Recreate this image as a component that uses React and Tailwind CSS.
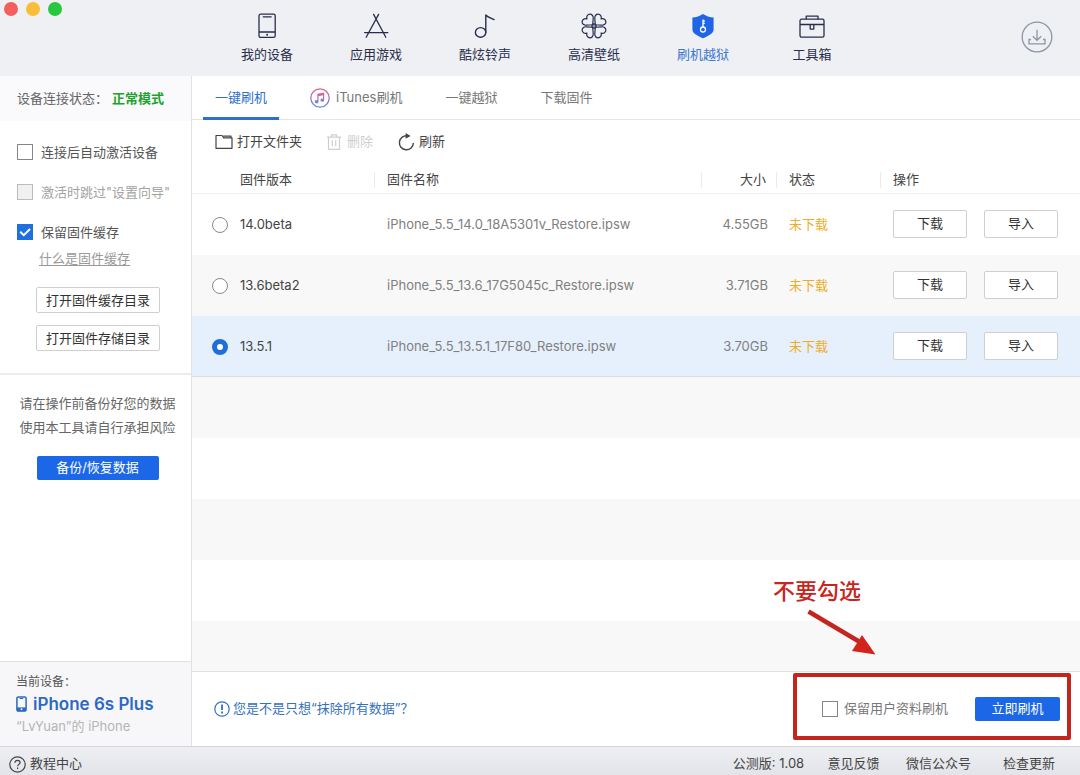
import React, { useState } from "react";

function DeviceIcon() {
  return (
    <svg width="26" height="26" viewBox="0 0 26 26" fill="none" stroke="#2a2e4a" strokeWidth="1.3">
      <rect x="5" y="1.2" width="16.2" height="23.2" rx="1.6" />
      <path d="M8.8 3.8h8.8M5 19h16.2" />
      <circle cx="13.1" cy="21.7" r="1" fill="#2a2e4a" stroke="none" />
    </svg>
  );
}

function AppsIcon() {
  return (
    <svg width="26" height="26" viewBox="0 0 26 26" fill="none" stroke="#2a2e4a" strokeWidth="1.3" strokeLinecap="round">
      <path d="M10.6 1.4 22.8 24.2M15.6 1.4 3.2 24.2M1.6 19.6h23.2" />
    </svg>
  );
}

function NoteIcon() {
  return (
    <svg width="26" height="26" viewBox="0 0 26 26" fill="none" stroke="#2a2e4a" strokeWidth="1.4" strokeLinejoin="round">
      <ellipse cx="8.6" cy="19.4" rx="5.2" ry="4.8" />
      <path d="M13.8 19.4V2c1.5 1.9 4.5 3 8.3 4.6" strokeLinecap="round" />
    </svg>
  );
}

const PETAL = "M13 11.2 8 6.900C6.200 5.300 6.200 3 7.500 1.700 9 .2 11.800.5 13 3c1.200-2.500 4-2.800 5.500-1.300 1.300 1.300 1.300 3.600-.5 5.200z";

function CloverIcon() {
  return (
    <svg width="26" height="26" viewBox="0 0 26 26" fill="none" stroke="#2a2e4a" strokeWidth="1.2" strokeLinejoin="round">
      {[45, 135, 225, 315].map((angle) => (
        <path key={angle} d={PETAL} transform={`rotate(${angle} 13 13)`} />
      ))}
      <circle cx="13" cy="13" r="2.1" fill="#7d93c8" />
    </svg>
  );
}

function ShieldIcon() {
  return (
    <svg width="26" height="26" viewBox="0 0 26 26" fill="none">
      <path d="M13 .9c3 2 6.8 3.3 10.6 3.5v12c0 3.900-5.500 6.600-10.600 8.800-5.100-2.200-10.600-4.900-10.600-8.800v-12C6.200 4.200 10 2.900 13 .9z" fill="#1f66e5" />
      <circle cx="13" cy="16.5" r="2.5" stroke="#fff" strokeWidth="1.3" />
      <path d="M13 14V6.500M13 8h1.800M13 10.300h1.800" stroke="#fff" strokeWidth="1.3" />
    </svg>
  );
}

function ToolboxIcon() {
  return (
    <svg width="26" height="26" viewBox="0 0 26 26" fill="none" stroke="#2a2e4a" strokeWidth="1.3" strokeLinejoin="round">
      <rect x="1" y="6.2" width="24" height="18" rx="1.6" />
      <path d="M7.2 6.2V3.2h11.8v3M1 11.5h24M11.2 11.5v4.6h3.6v-4.6" />
    </svg>
  );
}

function DownloadCircle() {
  return (
    <svg width="32" height="32" viewBox="0 0 32 32" fill="none" stroke="#8e95a3" strokeWidth="1.3">
      <circle cx="16" cy="16" r="14.8" />
      <path d="M16 8.800v10.400M11.800 15.200l4.200 4.100 4.200-4.100M10 18.500H8v4.300h16v-4.300h-2" />
    </svg>
  );
}

function ItunesIcon() {
  return (
    <svg width="20" height="20" viewBox="0 0 20 20" fill="none">
      <defs>
        <linearGradient id="tunes" x1="0" y1="0" x2="0" y2="1">
          <stop offset="0" stopColor="#e8607c" />
          <stop offset=".5" stopColor="#a873c4" />
          <stop offset="1" stopColor="#5b8fe0" />
        </linearGradient>
      </defs>
      <circle cx="10" cy="10" r="9.2" stroke="url(#tunes)" strokeWidth="1.3" />
      <path d="M7.3 5.800 14.200 4.500v7.700a1.900 1.600 0 1 1-1.200-1.500V7.300l-4.500.9v5.600a1.900 1.600 0 1 1-1.200-1.500z" fill="url(#tunes)" />
    </svg>
  );
}

function FolderIcon() {
  return (
    <svg width="18" height="16" viewBox="0 0 18 16" fill="none" stroke="#444" strokeWidth="1.2" strokeLinejoin="round">
      <path d="M1 14.300V1.500h6l1.800 2.300H17v10.500z" />
      <path d="M8.200 2.200H16v1.600" />
    </svg>
  );
}

function TrashIcon() {
  return (
    <svg width="14" height="16" viewBox="0 0 14 16" fill="none" stroke="#cfcfcf" strokeWidth="1.2">
      <path d="M0 3.200h14M4.500 3V.8h5V3M1.500 3.200v12.100h11V3.200M5.300 6.200v6M8.700 6.200v6" />
    </svg>
  );
}

function RefreshIcon() {
  return (
    <svg width="17" height="18" viewBox="0 0 17 18" fill="none">
      <path d="M9.600 2.900A7 7 0 1 0 15.400 10" stroke="#444" strokeWidth="1.4" />
      <path d="M7.600.1 12.600 2.900 7.600 5.700z" fill="#444" />
    </svg>
  );
}

function Checkbox({ id, defaultChecked, disabled }) {
  return (
    <span className="relative flex size-4 shrink-0">
      <input
        id={id}
        type="checkbox"
        defaultChecked={defaultChecked}
        disabled={disabled}
        className="peer size-4 appearance-none border border-[#858585] bg-white checked:border-[#1f6fe0] checked:bg-[#1f6fe0] disabled:border-[#bcbcbc] disabled:bg-[#f0f0f0]"
      />
      <svg viewBox="0 0 16 16" className="pointer-events-none absolute inset-0 hidden peer-checked:block" fill="none" stroke="#fff" strokeWidth="2">
        <path d="M3.2 7.800 6.800 11.200 13 5" />
      </svg>
    </span>
  );
}

const NAV = [
  { label: "我的设备", Icon: DeviceIcon },
  { label: "应用游戏", Icon: AppsIcon },
  { label: "酷炫铃声", Icon: NoteIcon },
  { label: "高清壁纸", Icon: CloverIcon },
  { label: "刷机越狱", Icon: ShieldIcon, active: true },
  { label: "工具箱", Icon: ToolboxIcon },
];

const FIRMWARE = [
  { version: "14.0beta", name: "iPhone_5.5_14.0_18A5301v_Restore.ipsw", size: "4.55GB" },
  { version: "13.6beta2", name: "iPhone_5.5_13.6_17G5045c_Restore.ipsw", size: "3.71GB" },
  { version: "13.5.1", name: "iPhone_5.5_13.5.1_17F80_Restore.ipsw", size: "3.70GB" },
];

function Header() {
  return (
    <header className="grid h-[76px] grid-cols-[1fr_auto_1fr] bg-[#eef0f4]">
      <div className="flex gap-2 pt-[2px] pl-1">
        <span className="size-3.5 rounded-full bg-[#f25f5c]" />
        <span className="size-3.5 rounded-full bg-[#fbbd38]" />
        <span className="size-3.5 rounded-full bg-[#27c840]" />
      </div>
      <nav className="flex">
        {NAV.map(({ label, Icon, active }) => (
          <a
            key={label}
            href="#"
            className={`flex w-[109px] flex-col items-center gap-[5px] pt-[13px] pr-px leading-5 ${active ? "text-[#3a78cf]" : "text-[#2a2e4a]"}`}
          >
            <Icon />
            {label}
          </a>
        ))}
      </nav>
      <div className="flex items-center justify-end pr-[27px] pb-0.5">
        <button type="button" aria-label="下载中心">
          <DownloadCircle />
        </button>
      </div>
    </header>
  );
}

function Sidebar() {
  const outline = "h-[26px] w-[124px] rounded-xs border border-[#cfcfcf] bg-white text-[#333]";
  return (
    <aside className="flex w-48 shrink-0 flex-col border-r border-[#e2e2e4]">
      <div className="flex h-[45px] items-center bg-[#faf9fb] pl-[17px] text-[#666]">
        设备连接状态：<strong className="ml-1 font-bold text-[#1ba32c]">正常模式</strong>
      </div>
      <div className="border-b-2 border-[#ececee] pt-[21px] pb-[22px] pl-[17px] leading-5">
        <div className="flex items-center gap-2 text-[#555]">
          <Checkbox id="auto" />
          <label htmlFor="auto">连接后自动激活设备</label>
        </div>
        <div className="mt-5 flex items-center gap-2 text-[#a3a3a3]">
          <Checkbox id="skip" disabled />
          <label htmlFor="skip">激活时跳过"设置向导"</label>
        </div>
        <div className="mt-5 flex items-center gap-2 text-[#555]">
          <Checkbox id="cache" defaultChecked />
          <label htmlFor="cache">保留固件缓存</label>
        </div>
        <a href="#" className="mt-1.5 ml-[22px] block text-[#999] underline underline-offset-2">什么是固件缓存</a>
        <div className="mt-[19px] ml-[19px] flex flex-col gap-3">
          <button type="button" className={outline}>打开固件缓存目录</button>
          <button type="button" className={outline}>打开固件存储目录</button>
        </div>
      </div>
      <div className="flex flex-1 flex-col items-center pt-4 pl-1">
        <p className="leading-6 text-[#666]">
          请在操作前备份好您的数据
          <br />
          使用本工具请自行承担风险
        </p>
        <button type="button" className="mt-[17px] h-6 w-[122px] rounded-xs bg-[#1b67e8] text-white">备份/恢复数据</button>
      </div>
      <div className="h-[85px] border-t border-[#e2e2e4] bg-[#f7f7f9] pt-2.5 pl-4">
        <p className="text-xs leading-5 text-[#555]">当前设备：</p>
        <p className="flex items-center gap-1.5 text-[17px] leading-6 font-semibold text-[#2c68c4]">
          <svg width="11" height="16" viewBox="0 0 11 16" fill="none">
            <rect x=".9" y=".9" width="9.2" height="14.2" rx="1.4" stroke="#2c68c4" strokeWidth="1.5" />
            <path d="M1 11.400h9v3.800H1z" fill="#2c68c4" />
            <path d="M3.800 2.500h3.400" stroke="#2c68c4" />
            <circle cx="5.5" cy="13.2" r=".9" fill="#fff" />
          </svg>
          iPhone 6s Plus
        </p>
        <p className="leading-5 text-[#b5b5b5]">“LvYuan”的 iPhone</p>
      </div>
    </aside>
  );
}

function Tabs() {
  const tab = "flex items-center gap-1.5 border-b-3 px-3 pt-[3px]";
  return (
    <nav className="flex h-11 gap-[19px] border-b border-[#e2e4e8] pl-[11px] text-[#777]">
      <a href="#" className={`${tab} -mb-px border-[#2d6fca] text-[#2d6fca]`}>一键刷机</a>
      <a href="#" className={`${tab} border-transparent`}>
        <ItunesIcon />
        iTunes刷机
      </a>
      <a href="#" className={`${tab} border-transparent`}>一键越狱</a>
      <a href="#" className={`${tab} border-transparent`}>下载固件</a>
    </nav>
  );
}

function HeadCell({ children, className = "" }) {
  return (
    <th scope="col" className="p-0 pt-0.5 text-left font-normal">
      <div className={`flex h-4 items-center border-l border-[#ebebeb] pl-3 ${className}`}>{children}</div>
    </th>
  );
}

function FirmwareTable() {
  const [picked, setPicked] = useState("13.5.1");
  const action = "h-7 w-[74px] rounded-xs border border-[#cccfd4] bg-white text-[#333]";
  return (
    <table className="w-full table-fixed border-separate border-spacing-0">
      <colgroup>
        <col className="w-[182px]" />
        <col />
        <col className="w-[75px]" />
        <col className="w-[104px]" />
        <col className="w-[200px]" />
      </colgroup>
      <thead className="text-[#444]">
        <tr className="h-[30px] [&>th]:border-b [&>th]:border-[#f0f0f0]">
          <th scope="col" className="p-0 pt-0.5 pl-12 text-left font-normal">固件版本</th>
          <HeadCell>固件名称</HeadCell>
          <HeadCell className="justify-end pr-2.5">大小</HeadCell>
          <HeadCell>状态</HeadCell>
          <HeadCell>操作</HeadCell>
        </tr>
      </thead>
      <tbody className="text-[#808080]">
        {FIRMWARE.map((row, i) => {
          const on = picked === row.version;
          const tone = on ? "bg-[#e6f0fd] [&>td]:border-[#d5dfea]" : i % 2 ? "bg-[#f8f8f8] [&>td]:border-transparent" : "bg-white [&>td]:border-transparent";
          return (
            <tr key={row.version} className={`h-[61px] [&>td]:border-b ${tone}`}>
              <td className="p-0 pt-px pl-5">
                <label className="flex items-center gap-3 text-[#444]">
                  <input
                    type="radio"
                    name="firmware"
                    checked={on}
                    onChange={() => setPicked(row.version)}
                    className="size-4 appearance-none rounded-full border border-[#8a8a8a] bg-white checked:border-5 checked:border-[#1f6fd6]"
                  />
                  {row.version}
                </label>
              </td>
              <td className="p-0 pt-0.5 pl-[13px]">{row.name}</td>
              <td className="p-0 pt-0.5 pr-2 text-right">{row.size}</td>
              <td className="p-0 pt-0.5 pl-[13px] text-[#efac25]">未下载</td>
              <td className="p-0 pl-[13px]">
                <div className="flex gap-[17px]">
                  <button type="button" className={action}>下载</button>
                  <button type="button" className={action}>导入</button>
                </div>
              </td>
            </tr>
          );
        })}
      </tbody>
    </table>
  );
}

function FlashBar() {
  return (
    <div className="relative flex h-[75px] items-center justify-between border-t border-[#e0e0e2] pr-5 pl-[22px]">
      <a href="#" className="flex items-center gap-[3px] text-[#3471bd]">
        <svg width="16" height="16" viewBox="0 0 16 16" fill="none" stroke="#3471bd">
          <circle cx="8" cy="8" r="7.2" strokeWidth="1.2" />
          <path d="M8 3.500v5.500M8 10.600v2" strokeWidth="1.8" />
        </svg>
        您是不是只想“抹除所有数据”？
      </a>
      <div className="flex items-center gap-1.5">
        <Checkbox id="keep" />
        <label htmlFor="keep" className="text-[#777]">保留用户资料刷机</label>
        <button type="button" className="ml-[21px] h-6 w-[85px] rounded-xs bg-[#1b67e8] text-white">立即刷机</button>
      </div>
      <div className="pointer-events-none absolute top-px right-[9px] h-[67px] w-[278px] rounded-xs border-4 border-[#c3261f]">
        <div className="absolute bottom-full -left-6 mb-5 flex w-[110px] flex-col">
          <span className="text-[22px] leading-8 font-medium text-[#c8261d]">不要勾选</span>
          <svg width="74" height="50" viewBox="0 0 74 50" className="ml-8">
            <path d="M3.500 4.500 54 34.500" stroke="#c3261f" strokeWidth="4.5" fill="none" />
            <path d="M57 28 70.500 47.500 47 44z" fill="#d4231a" />
          </svg>
        </div>
      </div>
    </div>
  );
}

function StatusBar() {
  return (
    <footer className="flex h-[29px] items-center justify-between border-t border-[#d4d5d9] bg-linear-to-b from-[#eeeff3] to-[#e3e4e9] pt-1.5 pr-[3px] pl-[9px] text-[#444]">
      <a href="#" className="flex items-center gap-1">
        <svg width="17" height="17" viewBox="0 0 17 17" fill="none" stroke="#444" strokeWidth="1.2">
          <circle cx="8.5" cy="8.5" r="7.7" />
          <path d="M5.900 6.800c0-1.600 1.100-2.500 2.600-2.500s2.600.9 2.600 2.300c0 1.700-2.500 1.900-2.500 3.700M8.600 11.500v1.500" />
        </svg>
        教程中心
      </a>
      <div className="flex text-center">
        <span className="w-[85px]">公测版: 1.08</span>
        <a href="#" className="w-[85px]">意见反馈</a>
        <a href="#" className="w-[85px]">微信公众号</a>
        <a href="#" className="w-24">检查更新</a>
      </div>
    </footer>
  );
}

export default function App() {
  return (
    <div className="flex min-h-screen flex-col bg-white font-['Inter','Noto_Sans_CJK_SC',sans-serif] text-[13px]">
      <Header />
      <div className="flex flex-1">
        <Sidebar />
        <main className="flex min-w-0 flex-1 flex-col">
          <Tabs />
          <div className="flex h-11 items-center gap-[25px] pl-[23px] text-[#444]">
            <button type="button" className="flex items-center gap-1">
              <FolderIcon />
              打开文件夹
            </button>
            <button type="button" disabled className="flex items-center gap-1.5 text-[#cfcfcf]">
              <TrashIcon />
              删除
            </button>
            <button type="button" className="flex items-center gap-1">
              <RefreshIcon />
              刷新
            </button>
          </div>
          <FirmwareTable />
          <div className="flex-1 bg-[repeating-linear-gradient(to_bottom,#f8f8f8_0px,#f8f8f8_61px,#ffffff_61px,#ffffff_122px)]" />
          <FlashBar />
        </main>
      </div>
      <StatusBar />
    </div>
  );
}
